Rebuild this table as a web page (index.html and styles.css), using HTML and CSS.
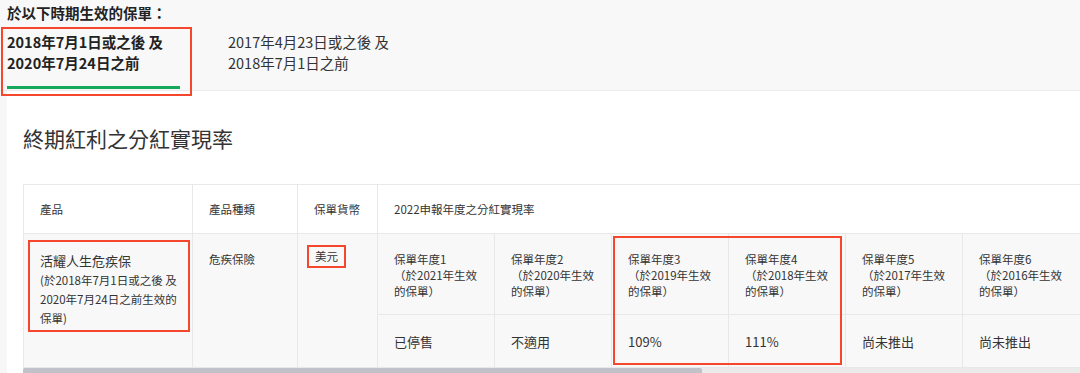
FILE: index.html
```html
<!DOCTYPE html>
<html lang="zh-Hant">
<head>
<meta charset="utf-8">
<link rel="stylesheet" href="styles.css">
</head>
<body>
<div class="band">
  <div class="band-title">於以下時期生效的保單：</div>
  <div class="tabs">
    <div class="tab active">2018年7月1日或之後 及<br>2020年7月24日之前</div>
    <div class="tab">2017年4月23日或之後 及<br>2018年7月1日之前</div>
  </div>
</div>
<div class="page">
  <div class="panel">
    <h2 class="heading">終期紅利之分紅實現率</h2>
    <div class="table-wrap">
      <table class="rates">
        <colgroup>
          <col class="c-prod"><col class="c-type"><col class="c-cur">
          <col class="c-yr"><col class="c-yr"><col class="c-yr"><col class="c-yr"><col class="c-yr"><col class="c-last">
        </colgroup>
        <tr class="r-head">
          <th>產品</th>
          <th>產品種類</th>
          <th>保單貨幣</th>
          <th colspan="6">2022申報年度之分紅實現率</th>
        </tr>
        <tr class="r-sub">
          <td rowspan="2" class="prod-cell">
            <div class="prod-box">
              <div class="prod-name">活耀人生危疾保</div>
              <div class="prod-note">(於2018年7月1日或之後 及<br>2020年7月24日之前生效的<br>保單)</div>
            </div>
          </td>
          <td rowspan="2" class="top-cell">危疾保險</td>
          <td rowspan="2" class="cur-cell"><span class="cur-box">美元</span></td>
          <td class="yr">保單年度1<br>（於2021年生效<br>的保單）</td>
          <td class="yr">保單年度2<br>（於2020年生效<br>的保單）</td>
          <td class="yr">保單年度3<br>（於2019年生效<br>的保單）</td>
          <td class="yr">保單年度4<br>（於2018年生效<br>的保單）</td>
          <td class="yr">保單年度5<br>（於2017年生效<br>的保單）</td>
          <td class="yr">保單年度6<br>（於2016年生效<br>的保單）</td>
        </tr>
        <tr class="r-val">
          <td>已停售</td>
          <td>不適用</td>
          <td>109%</td>
          <td>111%</td>
          <td>尚未推出</td>
          <td>尚未推出</td>
        </tr>
      </table>
      <div class="mark-years"></div>
    </div>
    <div class="scrollbar"><div class="thumb"></div></div>
  </div>
</div>
</body>
</html>
```

FILE: styles.css
```css
html, body {
  margin: 0;
  padding: 0;
  overflow: hidden;
}
body {
  background: #f7f7f7;
  font-family: "Noto Sans CJK TC", "Noto Sans", sans-serif;
  color: #333;
  width: 1080px;
  height: 373px;
}
.band {
  background: #f8f8f8;
  border-bottom: 1px solid #ececec;
  padding: 3px 0 0 7px;
  height: 87px;
  box-sizing: content-box;
}
.band-title {
  font-size: 14.5px;
  font-weight: 700;
  line-height: 20px;
  color: #222;
}
.tabs {
  display: flex;
  gap: 48px;
  margin-top: 9px;
}
.tab {
  position: relative;
  width: 173px;
  font-size: 14.5px;
  line-height: 20.5px;
  color: #333;
  padding-bottom: 13px;
  border-bottom: 3px solid transparent;
  white-space: nowrap;
}
.tab.active {
  font-weight: 700;
  color: #222;
  border-bottom-color: #17a95b;
}
.tab.active::after {
  content: "";
  position: absolute;
  left: -6px;
  top: -5px;
  width: 187px;
  height: 65px;
  border: 2px solid #f4472e;
}
.page {
  padding-left: 7px;
}
.panel {
  background: #fff;
  padding: 32px 0 0 16px;
  width: 1057px;
  height: 250px;
  overflow: hidden;
}
.heading {
  margin: 0;
  font-size: 21px;
  font-weight: 400;
  line-height: 30px;
  color: #333;
}
.table-wrap {
  position: relative;
  margin-top: 31px;
}
.rates {
  border-collapse: collapse;
  table-layout: fixed;
  width: 1059px;
}
.c-prod { width: 169px; }
.c-type { width: 105px; }
.c-cur { width: 80px; }
.c-yr { width: 117px; }
.c-last { width: 120px; }
.rates th, .rates td {
  border: 1px solid #e8e8e8;
  text-align: left;
  padding: 0 0 0 16px;
  font-weight: 400;
  box-sizing: border-box;
}
.r-head { height: 49px; }
.r-sub { height: 81px; }
.r-val { height: 53px; }
.r-head th {
  background: #fff;
  font-size: 11.5px;
  vertical-align: middle;
}
.r-sub td, .r-val td {
  background: #f8f8f8;
}
.r-sub td {
  vertical-align: top;
}
.yr {
  font-size: 11.5px;
  line-height: 16px;
  padding-top: 17px !important;
  white-space: nowrap;
}
.r-val td {
  font-size: 13px;
  vertical-align: middle;
}
.top-cell {
  font-size: 11.5px;
  line-height: 16px;
  padding-top: 17px !important;
}
.cur-cell {
  font-size: 11.5px;
  padding: 11px 0 0 9px !important;
}
.cur-box {
  display: inline-block;
  border: 2px solid #f4472e;
  padding: 1px 6px 2px;
  line-height: 16px;
}
.prod-cell {
  padding: 6px 2px 0 4px !important;
}
.prod-box {
  border: 2px solid #f4472e;
  padding: 9px 8px 2px 10px;
}
.prod-name {
  font-size: 13px;
  line-height: 20px;
}
.prod-note {
  font-size: 11.5px;
  line-height: 19px;
  white-space: nowrap;
}
.mark-years {
  position: absolute;
  left: 590px;
  top: 52px;
  width: 225px;
  height: 125px;
  border: 2px solid #f4472e;
}
.scrollbar {
  height: 6px;
  background: #ebebeb;
}
.thumb {
  width: 679px;
  height: 100%;
  background: #c1c1c9;
  border-radius: 2px;
}
```
